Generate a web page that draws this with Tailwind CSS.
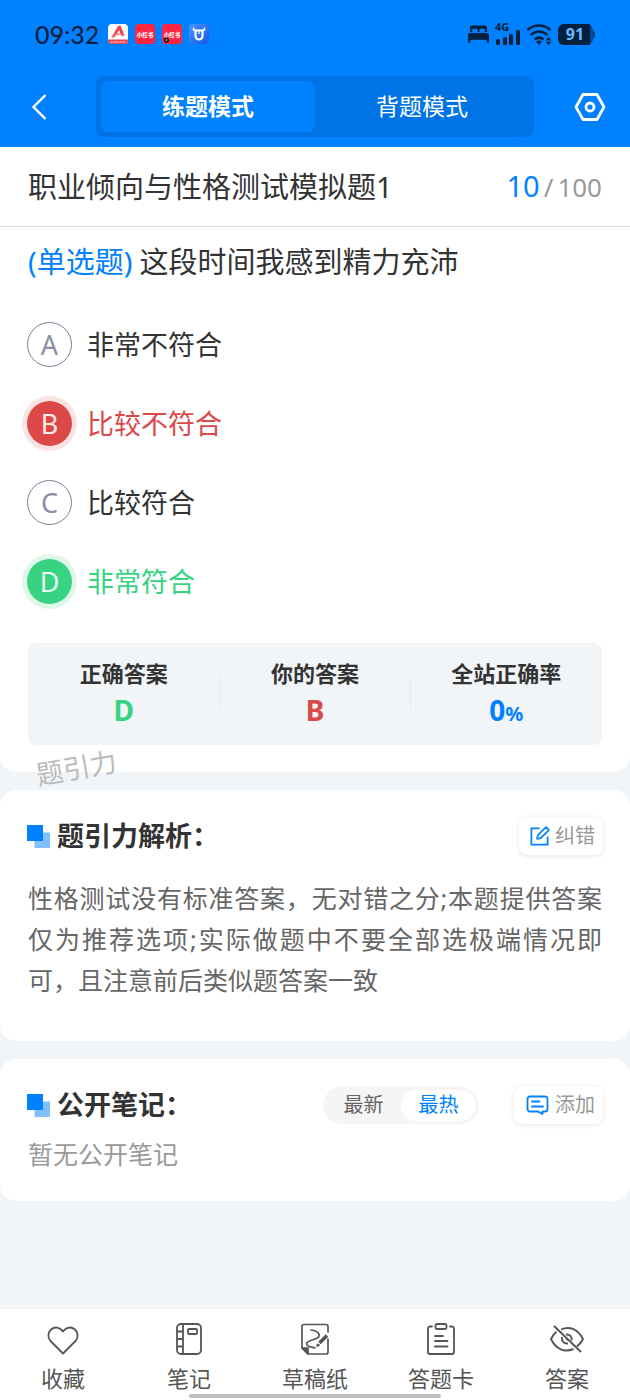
<!DOCTYPE html>
<html lang="zh-CN">
<head>
<meta charset="utf-8">
<meta name="viewport" content="width=device-width, initial-scale=1">
<title>职业倾向与性格测试模拟题1</title>
<script src="https://cdn.jsdelivr.net/npm/@tailwindcss/browser@4"></script>
</head>
<body class="flex min-h-screen flex-col bg-[#f1f5f8] font-['Noto_Sans','Noto_Sans_CJK_SC',sans-serif] text-[#333]">

<header class="bg-[#0081ff]">
  <!-- Status bar -->
  <div class="flex h-[68px] items-center justify-between px-[35px] text-[#04203f]">
    <div class="flex items-center gap-[7px]">
      <time class="mr-[2px] font-[Lato,sans-serif] text-[25px] leading-8 font-medium">09:32</time>
      <svg class="size-5" viewBox="0 0 20 20"><rect width="20" height="20" rx="4" fill="#fff"/><path d="M0 15.500h20v.5a4 4 0 0 1-4 4H4a4 4 0 0 1-4-4z" fill="#f0434d"/><path d="M3.500 13.500 10 2l2.500-.5 4 10-3 .5-2.500-6-4 7z" fill="#f0434d"/><path d="M6.500 10.500c3-2 5-1.500 8-.5l.5 1.500c-3-1-6-.5-9 1.500z" fill="#f58a8a"/><path d="M3 18h14" stroke="#ffc3c3" stroke-width="1.500" stroke-dasharray="1.500 .7"/></svg>
      <svg class="size-5" viewBox="0 0 20 20"><rect width="20" height="20" rx="4" fill="#ff2442"/><text x="10" y="12.500" text-anchor="middle" font-size="5.500" font-weight="900" fill="#fff">小红书</text></svg>
      <svg class="size-5" viewBox="0 0 20 20"><rect width="20" height="20" rx="4" fill="#ff2442"/><text x="10" y="12.500" text-anchor="middle" font-size="5.500" font-weight="900" fill="#fff">小红书</text><circle cx="4.500" cy="16" r="2.600" fill="#250610"/><circle cx="4.500" cy="16" r=".8" fill="#fff"/></svg>
      <svg class="size-5" viewBox="0 0 20 20"><defs><linearGradient id="app" x1="0" y1="0" x2="1" y2="1"><stop stop-color="#4b93f8"/><stop offset="1" stop-color="#1459e6"/></linearGradient></defs><rect width="20" height="20" rx="4" fill="url(#app)"/><path d="M6.500 6.500h7v5.500a3.500 3.500 0 0 1-7 0z" fill="none" stroke="#fff" stroke-width="2.200"/><path d="M4.500 3.500v2.500h2M15.500 3.500v2.500h-2" fill="none" stroke="#fff" stroke-width="1.400"/><path d="M10 7v3" stroke="#fff" stroke-width="1.200"/></svg>
    </div>
    <div class="flex items-center gap-[6px]">
      <svg class="h-5 w-[21px]" viewBox="0 0 22 20" fill="currentColor"><path d="M2 8V3.500A2.500 2.500 0 0 1 4.500 1h13A2.500 2.500 0 0 1 20 3.500V8h-2.500V5.500a1 1 0 0 0-1-1H13a1 1 0 0 0-1 1V8h-2V5.500a1 1 0 0 0-1-1H5.500a1 1 0 0 0-1 1V8zM2.500 9h17A2.500 2.500 0 0 1 22 11.500V19h-2.500v-3h-17v3H0v-7.500A2.500 2.500 0 0 1 2.500 9z"/></svg>
      <svg class="h-[22px] w-[25px] overflow-visible" viewBox="0 0 25 22" fill="currentColor"><text x="0" y="8" font-size="11" font-weight="700" font-family="Noto Sans">4G</text><rect x="1" y="16" width="4" height="6" rx="1.500"/><rect x="8" y="14" width="4" height="8" rx="1.500"/><rect x="14" y="11" width="4" height="11" rx="1.500"/><rect x="21" y="7" width="4" height="15" rx="1.500"/></svg>
      <svg class="h-[21px] w-[26px]" viewBox="0 0 25 21" fill="none" stroke="currentColor" stroke-width="2.600"><path d="M1 6c7-6 16-6 23 0M4 11c5.500-4.500 11.500-4.500 17 0M8 15.500c3-2.500 6-2.500 9 0"/><path d="M9.500 17.500q3-2 6 0l-3 3.500z" fill="currentColor" stroke="none"/><path d="m22 13 3 3.500h-6zM19 17.800h6L22 21z" fill="currentColor" stroke="none"/></svg>
      <div class="relative flex h-[21px] w-[37px] items-center">
        <svg class="absolute inset-0" viewBox="0 0 37 21"><rect width="35" height="21" rx="6" fill="#044a91"/><path d="M6 0h26v21H6a6 6 0 0 1-6-6V6a6 6 0 0 1 6-6z" fill="#04203f"/><rect x="34" y="7" width="3" height="7" rx="1" fill="#044a91"/></svg>
        <span class="relative w-[34px] text-center text-base leading-5 font-bold text-[#6cb5ff]">91</span>
      </div>
    </div>
  </div>

  <!-- Mode switch -->
  <div class="flex items-start justify-between pt-2 pr-6 pb-[10px] pl-6">
    <button aria-label="返回" class="flex h-[61px] w-8 items-center text-white"><svg class="h-[30px] w-7" viewBox="0 0 28 30" fill="none" stroke="currentColor" stroke-width="2.400"><path d="M21.500 3 9.500 15l12 12"/></svg></button>
    <div role="tablist" class="mx-10 flex h-[61px] flex-1 rounded-lg bg-[#0074e6] p-[5px] text-[23px] text-white">
      <button role="tab" aria-selected="true" class="flex-1 rounded-lg bg-[#0081ff] font-bold">练题模式</button>
      <button role="tab" aria-selected="false" class="flex-1 rounded-lg">背题模式</button>
    </div>
    <button aria-label="设置" class="flex h-[61px] w-8 items-center justify-end text-white"><svg class="h-[30px] w-8" viewBox="0 0 32 30" fill="none" stroke="currentColor" stroke-width="2.800" stroke-linejoin="round"><path d="M9 2.500h14L30 15l-7 12.500H9L2 15z"/><circle cx="16" cy="15" r="4"/></svg></button>
  </div>
</header>

<main class="flex flex-1 flex-col gap-[18px]">
  <section class="relative rounded-b-2xl bg-white pb-[27px]">
    <div class="flex h-20 items-center justify-between border-b border-[#dcdee0] px-7">
      <h1 class="text-[29px] leading-10">职业倾向与性格测试模拟题1</h1>
      <p class="text-[26px] leading-10 text-[#999]"><span class="text-[29px] text-[#0081ff]">10</span><span class="px-1">/</span>100</p>
    </div>
    <h2 class="px-7 pt-[15px] text-[29px] leading-10"><span class="mr-[7px] text-[#0081ff]">(单选题)</span>这段时间我感到精力充沛</h2>
    <ul class="mt-10 flex flex-col gap-[34px] px-[27px] text-[27px]">
      <li><button class="flex items-center gap-[15px] leading-[45px]"><span class="size-[45px] rounded-full border border-[#7d8096] text-center leading-[43px] text-[#8c8fa3]">A</span>非常不符合</button></li>
      <li><button class="flex items-center gap-[15px] leading-[45px] text-[#dc4848]"><span class="size-[45px] rounded-full bg-[#dc4848] text-center text-[#fbeaea] ring-5 ring-[#fae3e3]">B</span>比较不符合</button></li>
      <li><button class="flex items-center gap-[15px] leading-[45px]"><span class="size-[45px] rounded-full border border-[#7d8096] text-center leading-[43px] text-[#8c8fa3]">C</span>比较符合</button></li>
      <li><button class="flex items-center gap-[15px] leading-[45px] text-[#37d383]"><span class="size-[45px] rounded-full bg-[#37d383] text-center text-[#eafbf2] ring-5 ring-[#dff8ea]">D</span>非常符合</button></li>
    </ul>
    <dl class="mx-7 mt-[39px] grid grid-cols-3 items-center rounded-lg bg-[#f1f5f8] pt-3 pb-4 text-center font-bold">
      <div><dt class="text-[22px] leading-9">正确答案</dt><dd class="text-[28px] leading-[38px] text-[#37d383]">D</dd></div>
      <div class="relative before:absolute before:top-5 before:left-0 before:h-9 before:w-px before:bg-[#e8ebef] after:absolute after:top-5 after:right-0 after:h-9 after:w-px after:bg-[#e8ebef]"><dt class="text-[22px] leading-9">你的答案</dt><dd class="text-[28px] leading-[38px] text-[#dc4848]">B</dd></div>
      <div><dt class="text-[22px] leading-9">全站正确率</dt><dd class="text-[28px] leading-[38px] text-[#0081ff]">0<span class="text-xl">%</span></dd></div>
    </dl>
    <span class="absolute -bottom-4 left-9 -rotate-10 text-[27px] leading-10 text-[#bbb]">题引力</span>
  </section>

  <section class="rounded-2xl bg-white px-[27px] pt-[27px] pb-10">
    <div class="flex h-[38px] items-center justify-between">
      <h2 class="flex items-center gap-[7px] text-[27px] leading-9 font-bold"><svg class="size-[23px]" viewBox="0 0 23 23"><path d="M7.500 7.500H23V23H7.500z" fill="#80c0ff"/><path d="M0 0h16v16H0z" fill="#0081ff"/></svg>题引力解析：</h2>
      <button class="flex h-[38px] items-center gap-1 rounded-lg bg-white pr-2 pl-[10px] text-xl text-[#999] shadow-[0_1px_5px_#0000001c]"><svg class="size-[22px]" viewBox="0 0 23 23" fill="none" stroke="#0081ff" stroke-width="1.800"><path d="M11 3.500H2.500v17h17V12"/><path d="m8.500 14.500.7-4 8.600-8.200 3 3-8.500 8.500z" stroke-linejoin="round"/></svg>纠错</button>
    </div>
    <p class="mx-px mt-[23px] text-justify text-[25px] leading-[41px] text-[#666]">性格测试没有标准答案，无对错之分;本题提供答案仅为推荐选项;实际做题中不要全部选极端情况即可，且注意前后类似题答案一致</p>
  </section>

  <section class="rounded-2xl bg-white px-[27px] pt-[27px] pb-[29px]">
    <div class="flex h-[38px] items-center">
      <h2 class="flex flex-1 items-center gap-[7px] text-[27px] leading-9 font-bold"><svg class="size-[23px]" viewBox="0 0 23 23"><path d="M7.500 7.500H23V23H7.500z" fill="#80c0ff"/><path d="M0 0h16v16H0z" fill="#0081ff"/></svg>公开笔记：</h2>
      <div role="tablist" class="mr-[35px] flex h-[37px] rounded-full bg-[#f5f5f5] p-[3px] text-xl text-[#666]">
        <button role="tab" aria-selected="false" class="w-[75px] rounded-full">最新</button>
        <button role="tab" aria-selected="true" class="w-[75px] rounded-full bg-white text-[#0081ff]">最热</button>
      </div>
      <button class="flex h-[38px] items-center gap-[6px] rounded-lg bg-white pr-2 pl-3 text-xl text-[#999] shadow-[0_1px_5px_#0000001c]"><svg class="h-[22px] w-[23px]" viewBox="0 0 23 22" fill="none" stroke="#0081ff" stroke-width="1.800" stroke-linejoin="round" stroke-linecap="round"><path d="M12 17.500H4A2.500 2.500 0 0 1 1.500 15V5A2.500 2.500 0 0 1 4 2.500h15A2.500 2.500 0 0 1 21.500 5v10a2.500 2.500 0 0 1-2.500 2.500h-2.500V20L12 17.500M6 7.500h7.500M6 12.500h11"/></svg>添加</button>
    </div>
    <p class="mx-px mt-3 text-[25px] leading-9 text-[#999]">暂无公开笔记</p>
  </section>
</main>

<nav class="relative bg-white pt-3 pb-[6px] text-[22px] leading-8 text-[#555]">
  <div class="grid grid-cols-5">
    <button class="flex flex-col items-center gap-[5px]"><svg class="size-9" viewBox="0 0 36 36" fill="none" stroke="currentColor" stroke-width="1.800" stroke-linejoin="round"><path d="M18 32.500 5.500 20C-1.500 11.500 10.500.500 18 10.500c7.500-10 19.500 1 12.500 9.500z"/></svg>收藏</button>
    <button class="flex flex-col items-center gap-[5px]"><svg class="size-9" viewBox="0 0 36 36" fill="none" stroke="currentColor" stroke-width="1.800"><rect x="6" y="3" width="24" height="30" rx="4"/><path d="M12 3v30M6 10.500h6M6 18h6M6 25.500h6"/><rect x="17" y="8" width="9" height="5" rx="1"/></svg>笔记</button>
    <button class="flex flex-col items-center gap-[5px]"><svg class="size-9" viewBox="0 0 36 36" fill="none" stroke="currentColor" stroke-width="1.700" stroke-linejoin="round" stroke-linecap="round"><path d="M31 11V5.500A2 2 0 0 0 29 3.500H7a2 2 0 0 0-2 2V27l6 6h18a2 2 0 0 0 2-2V18"/><path d="M5 27h6v6z" fill="currentColor"/><path d="M14 9c4 0 9 3 8 6-1 4-12 4-12.500 7.500C9.500 26 15 26 18 27"/><path d="m22.500 22 7.500-7.500" stroke-width="3.500" stroke-linecap="butt"/><path d="m20 25 2-.7-1-1z" fill="currentColor"/></svg>草稿纸</button>
    <button class="flex flex-col items-center gap-[5px]"><svg class="size-9" viewBox="0 0 36 36" fill="none" stroke="currentColor" stroke-width="1.800" stroke-linecap="round"><path d="M9 5.500H7A2 2 0 0 0 5 7.500V31a2 2 0 0 0 2 2h22a2 2 0 0 0 2-2V7.500a2 2 0 0 0-2-2h-2"/><rect x="12.500" y="3" width="11" height="5" rx="1.500"/><path d="M12 15h8M12 20h12.500M12 25.500h12.500"/></svg>答题卡</button>
    <button class="flex flex-col items-center gap-[5px]"><svg class="size-9" viewBox="0 0 36 36" fill="none" stroke="currentColor" stroke-width="1.900"><path d="m5 5 27 26"/><path d="M12 8.500c9-4 17 0 22 9.500-1.500 3-3.500 5.500-6 7.500M24.500 28C15 32 6.500 27.500 2 18c1.500-3 3.200-5.500 5.500-7.200"/><path d="M17 13.500c4-.5 6.500 3 5.500 6M13 16c-1 4 2 7 6 6.500M17.500 17.500l1.500 1.500"/></svg>答案</button>
  </div>
  <div class="absolute bottom-[2px] left-[30%] h-1 w-2/5 rounded-full bg-[#bdbdbd]"></div>
</nav>
</body>
</html>
